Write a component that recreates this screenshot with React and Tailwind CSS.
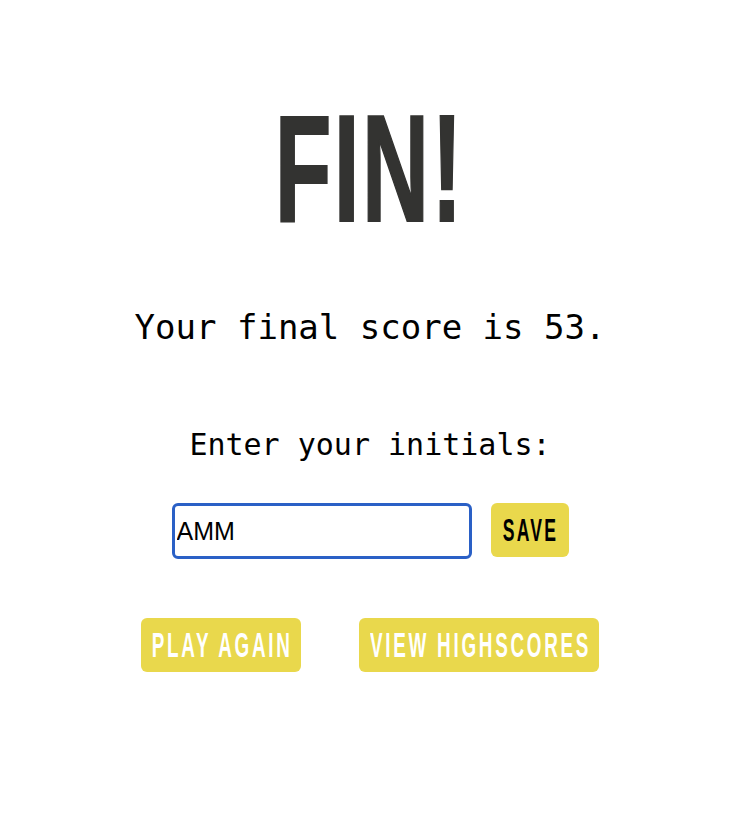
import React from "react";

export default function App() {
  return (
    <div className="min-h-[832px] w-[756px] bg-white">
      <div className="flex w-[740px] flex-col items-center pt-[92px]">
        <h1 className="h-[152px] text-[152px] leading-none font-bold text-[#333331] [-webkit-text-stroke:2px_#333331] [font-family:'Liberation_Sans',Arial,sans-serif]">
          <span className="inline-block scale-x-[0.61] tracking-[4px]">FIN!</span>
        </h1>
        <p className="mt-[63px] h-[40px] text-[34px] leading-[40px] text-black [font-family:'DejaVu_Sans_Mono',monospace]">
          Your final score is 53.
        </p>
        <p className="mt-[80px] h-[36px] text-[30px] leading-[36px] text-black [font-family:'DejaVu_Sans_Mono',monospace]">
          Enter your initials:
        </p>
        <div className="mt-[40px] flex items-start gap-[19px]">
          <input
            defaultValue="AMM"
            className="h-[56px] w-[300px] rounded-[6px] border-[3px] border-[#2a60c6] bg-white px-[2px] text-[25px] text-black outline-none [font-family:'Liberation_Sans',Arial,sans-serif]"
          />
          <button className="flex h-[54px] w-[78px] items-center justify-center rounded-[6px] bg-[#e9d84c] text-[32px] font-bold text-black [font-family:'Liberation_Sans',Arial,sans-serif]">
            <span className="inline-block scale-x-[0.55] tracking-[4px] whitespace-nowrap pl-[4px]">SAVE</span>
          </button>
        </div>
        <div className="mt-[59px] flex gap-[58px]">
          <button className="flex h-[54px] w-[160px] items-center justify-center rounded-[6px] bg-[#e9d84c] text-[35px] font-bold text-white [font-family:'Liberation_Sans',Arial,sans-serif]">
            <span className="inline-block scale-x-[0.54] tracking-[5px] whitespace-nowrap pl-[5px]">PLAY AGAIN</span>
          </button>
          <button className="flex h-[54px] w-[240px] items-center justify-center rounded-[6px] bg-[#e9d84c] text-[35px] font-bold text-white [font-family:'Liberation_Sans',Arial,sans-serif]">
            <span className="inline-block scale-x-[0.54] tracking-[5px] whitespace-nowrap pl-[5px]">VIEW HIGHSCORES</span>
          </button>
        </div>
      </div>
    </div>
  );
}
